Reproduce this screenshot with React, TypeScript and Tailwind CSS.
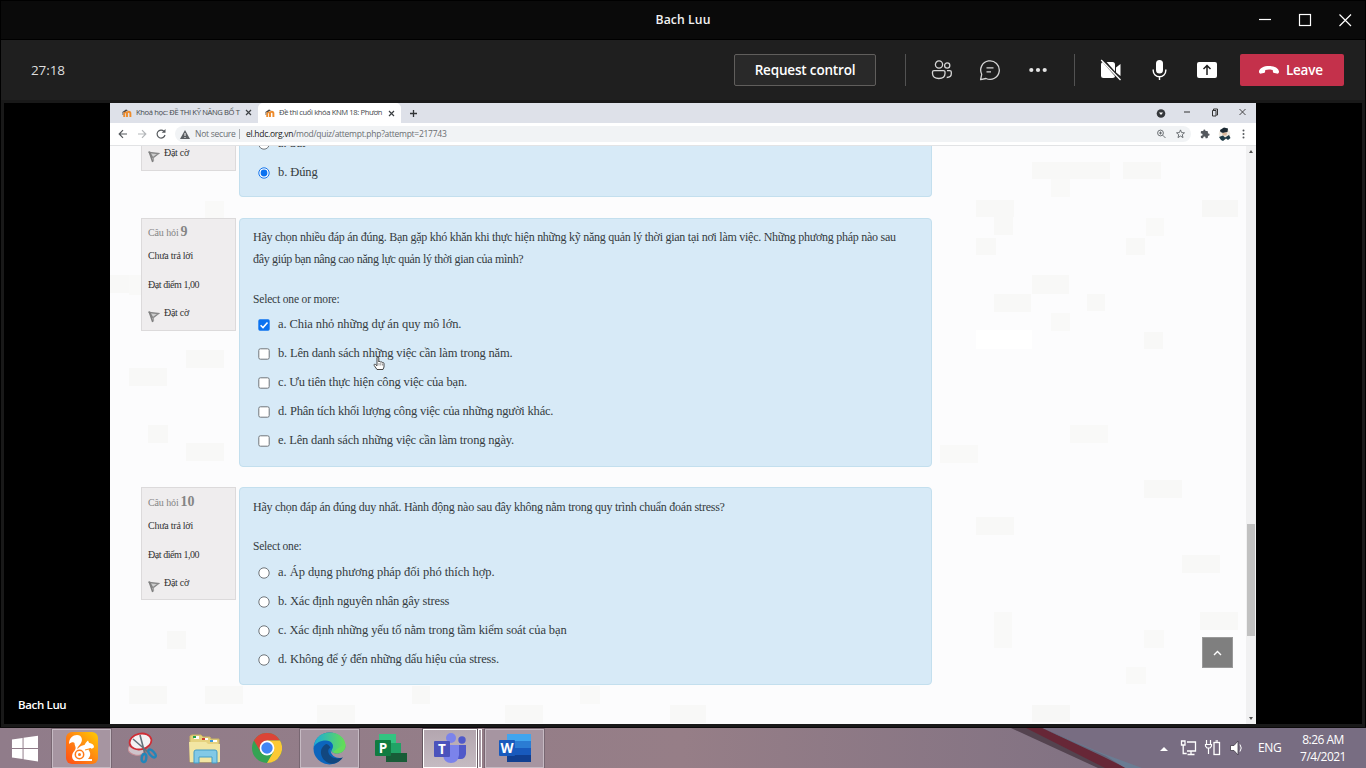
import React from "react";

const uiFont = "font-['Open_Sans','Noto_Sans',sans-serif]";
const serif = "font-['Liberation_Serif',serif]";

type Option = { text: string; checked?: boolean; track?: string };

function MoodleIcon() {
  return (
    <svg width="10" height="10" viewBox="0 0 10 10" className="shrink-0">
      <path d="M2.200 9V5.500a1.300 1.300 0 0 1 2.700 0V9M5 9V5.500a1.500 1.500 0 0 1 3.400 0V9" fill="none" stroke="#ee8c2c" strokeWidth="1.900" />
      <path d="M0 4.200 4 1.400l2 .9-3.800 2z" fill="#4a4542" />
      <path d="M.8 4v3" stroke="#4a4542" strokeWidth=".6" />
    </svg>
  );
}

function TabClose() {
  return (
    <svg width="7" height="7" viewBox="0 0 7 7" className="shrink-0">
      <path d="M1 1l5 5M6 1L1 6" stroke="#3c4043" strokeWidth="1.2" />
    </svg>
  );
}

function Flag() {
  return (
    <svg width="12" height="13" viewBox="0 0 12 13" className="shrink-0">
      <path d="M1.400 2.500 10.500 3.500 5 7.800z" fill="#cfcfcf" stroke="#888" strokeWidth="1.400" />
      <path d="M1.200 1.500 4.800 12" stroke="#808080" strokeWidth="1.700" />
      <path d="M5.500 7.500 5.600 11" stroke="#a0a0a0" />
    </svg>
  );
}

function InfoCard({ n, pad }: { n: string; pad: string }) {
  return (
    <div className={`${serif} ${pad} flex h-[113px] w-[95px] shrink-0 flex-col whitespace-nowrap border border-[#dcdadb] bg-[#efedee] pl-[6px] text-[10px] text-[#333]`}>
      <div className="mt-[4px] flex h-[18px] items-baseline gap-[2px] text-[#858585]">
        <span className="tracking-[-0.12px]">Câu hỏi</span>
        <span className="text-[14px] font-bold leading-[18px]">{n}</span>
      </div>
      <div className="mt-[6px] h-[18px] leading-[18px] tracking-[-0.25px]">Chưa trả lời</div>
      <div className="mt-[11px] h-[18px] leading-[18px] tracking-[-0.45px]">Đạt điểm 1,00</div>
      <div className="mt-[11px] flex h-[18px] leading-[18px]">
        <span className="mt-[5px] mr-[4px]"><Flag /></span>
        <span className="-mt-px tracking-[-0.3px]">Đặt cờ</span>
      </div>
    </div>
  );
}

function Mark({ kind, checked }: { kind: "radio" | "box"; checked?: boolean }) {
  return (
    <svg width="12" height="12" viewBox="0 0 12 12" className="shrink-0">
      {kind === "radio" ? (
        <>
          <circle cx="6" cy="6" r="5.200" fill="#fff" stroke={checked ? "#1273eb" : "#6f757a"} />
          {checked && <circle cx="6" cy="6" r="3.400" fill="#0b72f0" />}
        </>
      ) : checked ? (
        <>
          <rect x=".3" y=".3" width="11.400" height="11.400" rx="1.600" fill="#0b72f0" />
          <path d="M2.600 6.200 5 8.600 9.500 3.400" fill="none" stroke="#fff" strokeWidth="1.500" />
        </>
      ) : (
        <rect x=".8" y=".8" width="10.400" height="10.400" rx="1.600" fill="#fff" stroke="#6f757a" />
      )}
    </svg>
  );
}

function Options({ items, kind }: { items: Option[]; kind: "radio" | "box" }) {
  return (
    <div className="flex flex-col">
      {items.map((o) => (
        <div key={o.text} className="flex h-[29px] items-center gap-[8px] pl-[5px]">
          <Mark kind={kind} checked={o.checked} />
          <span className={`-mt-px whitespace-nowrap text-[12.5px] leading-[20px] ${o.track ?? ""}`}>{o.text}</span>
        </div>
      ))}
    </div>
  );
}

const blue = `${serif} w-[693px] shrink-0 rounded-[4px] border border-[#c3dfee] bg-[#d7eaf7] pl-[13px] text-[#353b40]`;

const tiles: [number, number, number, number, string][] = [
  [922, 17, 78, 17, "#f8f8f7"], [1013, 17, 38, 17, "#f8f8f7"], [941, 34, 19, 18, "#f9f9f8"], [866, 55, 38, 17, "#f8f8f7"], [884, 72, 19, 18, "#f8f8f7"],
  [1092, 55, 36, 17, "#f7f7f6"], [1036, 73, 18, 18, "#f9f9f8"], [866, 93, 20, 17, "#f8f8f7"], [1016, 93, 19, 17, "#f8f8f7"], [922, 130, 37, 19, "#f8f8f7"],
  [884, 149, 37, 18, "#f8f8f7"], [977, 149, 18, 17, "#f8f8f7"], [941, 168, 19, 18, "#f9f9f8"], [1034, 187, 19, 17, "#f8f8f7"], [866, 185, 56, 19, "#fff"],
  [0, 130, 20, 18, "#f8f8f7"], [76, 205, 38, 18, "#f8f8f7"], [19, 223, 38, 18, "#f8f8f7"], [38, 280, 20, 18, "#f8f8f7"], [76, 298, 38, 18, "#f8f8f7"],
  [95, 56, 19, 17, "#f9f9f8"], [19, 130, 19, 20, "#f9f9f8"], [57, 486, 19, 18, "#f8f8f7"], [19, 541, 38, 18, "#f8f8f7"], [95, 541, 38, 18, "#f8f8f7"],
  [207, 560, 38, 18, "#f8f8f7"], [302, 541, 18, 18, "#f8f8f7"], [395, 560, 38, 18, "#f8f8f7"], [470, 541, 20, 18, "#f9f9f8"], [560, 560, 36, 18, "#f8f8f7"],
  [922, 560, 38, 17, "#f7f7f6"], [884, 467, 18, 36, "#f9f9f8"], [1034, 485, 20, 18, "#f9f9f8"], [1090, 467, 38, 18, "#f8f8f7"], [1016, 522, 20, 17, "#f9f9f8"],
  [830, 300, 38, 18, "#f9f9f8"], [960, 280, 38, 18, "#f9f9f8"], [1034, 335, 38, 18, "#f8f8f7"], [866, 372, 38, 18, "#f8f8f7"], [1072, 410, 38, 18, "#f8f8f7"],
];

function WindowsBtns() {
  return (
    <svg width="110" height="20" viewBox="0 0 110 20" fill="none" stroke="#fff" strokeWidth="1.200">
      <path d="M11 9.500h12" />
      <rect x="51.500" y="4.500" width="11" height="11" />
      <path d="M91.500 4.500l11.500 11.500M103 4.500L91.500 16" />
    </svg>
  );
}

function Task({ active, children }: { active?: boolean; children?: React.ReactNode }) {
  return (
    <div className={`flex h-[39px] w-[59px] shrink-0 items-center justify-center ${active ? "border border-[#c6bac3] bg-[#a695a1] outline outline-[#786772]" : "pr-[2px]"}`}>
      {children}
    </div>
  );
}

export default function App() {
  return (
    <div className={`${uiFont} flex h-[768px] w-[1366px] flex-col overflow-hidden bg-black`}>
      <div className="flex h-[40px] shrink-0 items-center border border-black bg-[#0a0a0a]">
        <div className="w-[200px]" />
        <div className="flex-1 pl-[45px] text-center text-[12.200px] font-semibold tracking-[0.1px] text-[#f2f2f2]">Bach Luu</div>
        <div className="w-[245px] pl-[128px]"><WindowsBtns /></div>
      </div>

      <div className="mx-px flex h-[60px] shrink-0 items-center bg-[#1f1f1f] pl-[30px] pr-[21px]">
        <div className="flex-1 text-[13.5px] tracking-[-0.1px] text-[#dedede]">27:18</div>
        <div className="flex h-[32px] w-[142px] items-center justify-center rounded-[2px] border border-[#605e5c] bg-[#292929] text-[13.5px] font-semibold tracking-[-0.17px] text-white">Request control</div>
        <div className="ml-[29px] h-[32px] w-px bg-[#525252]" />
        <svg className="ml-[25px]" width="22" height="20" viewBox="0 0 22 20" fill="none" stroke="#d6d6d6" strokeWidth="1.300">
          <circle cx="8" cy="4.500" r="3.600" /><circle cx="16.200" cy="5.500" r="2.600" />
          <path d="M3 10.600h9.500a1.500 1.500 0 0 1 1.500 1.500v1.500c0 3-2.500 4.900-6.200 4.900S1.500 16.600 1.500 13.600v-1.500A1.500 1.500 0 0 1 3 10.600zM16 10.600h2.800a1.500 1.500 0 0 1 1.500 1.500v1.700c0 2.300-1.800 3.700-4.600 3.700" />
        </svg>
        <svg className="ml-[26px]" width="22" height="22" viewBox="0 0 22 22" fill="none" stroke="#d6d6d6" strokeWidth="1.300">
          <path d="M1.600 20.600l1.100-5.300A9.300 9.300 0 1 1 7 19.500z" strokeLinejoin="round" /><path d="M7.500 8.800h7M7.500 12.800h4.500" />
        </svg>
        <svg className="ml-[27px]" width="20" height="6" viewBox="0 0 20 6" fill="#e4e4e4"><circle cx="3.300" cy="3" r="2.100" /><circle cx="10" cy="3" r="2.100" /><circle cx="16.700" cy="3" r="2.100" /></svg>
        <div className="ml-[26px] h-[32px] w-px bg-[#525252]" />
        <svg className="ml-[25px]" width="22" height="22" viewBox="0 0 22 22">
          <rect x="1" y="3" width="14" height="16" rx="2.500" fill="#fff" /><path d="M16 8.500l4.500-3.500v12L16 13.500z" fill="#fff" />
          <path d="M2.500.8l17.800 20" stroke="#1f1f1f" strokeWidth="3.200" /><path d="M1.200 1l19.300 20" stroke="#fff" strokeWidth="1.300" />
        </svg>
        <svg className="ml-[29px] mr-[-1px]" width="18" height="22" viewBox="0 0 18 22" fill="none" stroke="#fff" strokeWidth="1.400">
          <rect x="5" y="1" width="7" height="13.500" rx="3.500" fill="#fff" stroke="none" /><path d="M2.200 10.500v1a6.300 6.300 0 0 0 12.600 0v-1M8.500 17.500V21" />
        </svg>
        <svg className="ml-[27px]" width="24" height="20" viewBox="0 0 24 20">
          <rect x="2" y="2" width="20" height="16" rx="2" fill="#fff" /><path d="M12 15V5.800M8.500 9L12 5.500 15.500 9" fill="none" stroke="#1f1f1f" strokeWidth="1.500" />
        </svg>
        <div className="ml-[21px] flex h-[32px] w-[104px] items-center rounded-[2px] bg-[#c4314b] pl-[18px] text-[13.5px] font-semibold tracking-[-0.25px] text-white">
          <svg width="22" height="12" viewBox="0 0 22 12" className="mr-[6px]"><path d="M1 7.600C1.400 4 6 2 11 2s9.600 2 10 5.600c.1 1.600-.8 2.300-2.200 2l-2.400-.5c-1-.2-1.400-.7-1.500-1.600l-.2-1.400c-2.400-.8-5-.8-7.400 0l-.2 1.400c-.1.900-.5 1.400-1.500 1.600l-2.400.5C1.800 9.900.9 9.200 1 7.600z" fill="#fff" /></svg>
          Leave
        </div>
      </div>

      <div className="mx-px flex h-[627px] shrink-0 border-x-[3px] border-b-[3px] border-t-[3px] border-[#191919] bg-black">
        <div className="flex w-[106px] shrink-0 flex-col justify-end pb-[11px] pl-[14px] text-[11.500px] font-semibold tracking-[-0.35px] text-white">Bach Luu</div>

        <div className="flex w-[1146px] shrink-0 flex-col bg-[#fcfcfd]">
          <div className="flex h-[20px] shrink-0 items-center bg-[#dee1e9] text-[7.600px] text-[#45494d]">
            <div className="flex w-[148px] shrink-0 items-center pl-[12px]">
              <MoodleIcon />
              <span className="ml-[4px] w-[105px] whitespace-nowrap tracking-[-0.36px]">Khoá học: ĐỀ THI KỸ NĂNG BỔ T</span>
              <span className="ml-[4px] flex"><TabClose /></span>
            </div>
            <div className="flex h-[20px] w-[143px] shrink-0 items-center rounded-t-[5px] bg-white pl-[7px]">
              <MoodleIcon />
              <span className="ml-[4px] w-[105px] whitespace-nowrap tracking-[-0.38px]">Đề thi cuối khóa KNM 18: Phươn</span>
              <span className="ml-[4px] flex"><TabClose /></span>
            </div>
            <svg className="ml-[8px]" width="9" height="9" viewBox="0 0 9 9"><path d="M4.500 1v7M1 4.500h7" stroke="#303336" strokeWidth="1.300" /></svg>
            <div className="flex-1" />
            <svg className="mr-[10px] mb-[2px]" width="90" height="12" viewBox="0 0 90 12" fill="none" stroke="#333">
              <circle cx="5" cy="7.500" r="4.300" fill="#35383c" stroke="none" /><path d="M3 6.500h4L5 9.100z" fill="#fff" stroke="none" />
              <path d="M28 6h6M56.500 4.500h3.500v5.500h-3.500zM57.500 4V3h4v6h-1" /><path d="M83.500 3l6 6M89.500 3l-6 6" strokeWidth=".9" />
            </svg>
          </div>
          <div className="flex h-[23px] shrink-0 items-center border-b border-[#e2e3e5] bg-white">
            <svg className="ml-[7px] shrink-0" width="50" height="12" viewBox="0 0 50 12" fill="none" stroke="#54585c" strokeWidth="1.200">
              <path d="M10 6H2.500M6 2.200L2.200 6 6 9.800" /><path d="M21 6h7.500M25 2.200L28.800 6 25 9.800" stroke="#b4b7ba" />
              <path d="M47 3.300A4 4 0 1 0 48 7" /><path d="M48.500 1v3.800h-3.800z" fill="#54585c" stroke="none" />
            </svg>
            <div className="ml-[8px] flex h-[16px] flex-1 items-center rounded-full bg-[#f1f3f5] pl-[5px] text-[8.500px] text-[#6a6e72]">
              <svg width="10" height="9" viewBox="0 0 10 9"><path d="M5 0l5 9H0z" fill="#5a5e62" /><path d="M5 3v3M5 7v1" stroke="#fff" /></svg>
              <span className="ml-[5px] w-[41px] whitespace-nowrap tracking-[-0.25px]">Not secure</span>
              <span className="ml-[3px] h-[10px] w-px bg-[#a9adb1]" />
              <span className="ml-[6px] whitespace-nowrap tracking-[-0.27px]"><span className="text-[#222]">el.hdc.org.vn</span>/mod/quiz/attempt.php?attempt=217743</span>
              <span className="flex-1" />
              <svg className="mr-[5px]" width="30" height="10" viewBox="0 0 30 10" fill="none" stroke="#5f6368" strokeWidth=".9">
                <circle cx="4.500" cy="4" r="2.900" /><path d="M6.700 6.200L9.500 9M3 4h3M4.500 2.500v3" />
                <path d="M24.500.9l1.100 2.700 2.900.2-2.200 1.900.7 2.900-2.500-1.600L22 8.600l.7-2.900-2.200-1.900 2.900-.2z" />
              </svg>
            </div>
            <svg className="ml-[9px]" width="10" height="10" viewBox="0 0 24 24" fill="#54585d"><path d="M20.500 11H19V7a2 2 0 0 0-2-2h-4V3.500a2.500 2.500 0 0 0-5 0V5H4a2 2 0 0 0-2 2v3.800h1.500a2.700 2.700 0 0 1 0 5.400H2V20a2 2 0 0 0 2 2h3.800v-1.500a2.700 2.700 0 0 1 5.400 0V22H17a2 2 0 0 0 2-2v-4h1.500a2.500 2.500 0 0 0 0-5z" /></svg>
            <svg className="ml-[8px]" width="13" height="14" viewBox="0 0 13 14"><circle cx="6.500" cy="7" r="5.800" fill="#efeae2" /><path d="M2 3l4-2.500 4 1L9.500 5 5 6 2.500 5z" fill="#1c2a33" /><path d="M4 6l5-.5-.5 3H5z" fill="#d9b99b" /><path d="M1 10l4-1.500 2 2 4-2.500 1.500 3-2.500 2-2-1.500-3 2.500-2-1z" fill="#1d3a45" /></svg>
            <svg className="ml-[11px] mr-[11px]" width="3" height="10" viewBox="0 0 3 10" fill="#55595d"><circle cx="1.500" cy="1.500" r="1" /><circle cx="1.500" cy="5" r="1" /><circle cx="1.500" cy="8.500" r="1" /></svg>
          </div>

          <div className="relative flex h-[578px] overflow-hidden">
            <svg className="absolute left-0 top-0" width="1136" height="578" viewBox="0 1 1136 578">
              {tiles.map(([x, y, w, h, c], i) => <rect key={i} x={x} y={y} width={w} height={h} fill={c} />)}
            </svg>
            <div className="relative flex w-[1136px] flex-col pl-[31px]">
              <div className="flex h-[72px] shrink-0 gap-[3px]">
                <div className={`${serif} flex h-[25px] w-[95px] shrink-0 border border-t-0 border-[#dcdadb] bg-[#efedee] pl-[6px] text-[10px] text-[#333]`}>
                  <span className="mt-[4px] mr-[4px]"><Flag /></span><span className="leading-[14px] tracking-[-0.3px]">Đặt cờ</span>
                </div>
                <div className={`${blue} h-[51px] overflow-hidden border-t-0 rounded-t-none`}>
                  <div className="-mt-[17px]"><Options kind="radio" items={[{ text: "a. Sai" }, { text: "b. Đúng", checked: true, track: "tracking-[-0.1px]" }]} /></div>
                </div>
              </div>
              <div className="flex h-[269px] shrink-0 gap-[3px]">
                <InfoCard n="9" pad="" />
                <div className={`${blue} h-[249px]`}>
                  <p className="mt-[7px] whitespace-nowrap text-[12px] leading-[22px] tracking-[-0.265px]">Hãy chọn nhiều đáp án đúng. Bạn gặp khó khăn khi thực hiện những kỹ năng quản lý thời gian tại nơi làm việc. Những phương pháp nào sau<br /><span className="tracking-[-0.33px]">đây giúp bạn nâng cao năng lực quản lý thời gian của mình?</span></p>
                  <p className="mb-[2px] mt-[18px] h-[20px] text-[11.5px] leading-[22px] tracking-[-0.17px]">Select one or more:</p>
                  <Options kind="box" items={[
                    { text: "a. Chia nhỏ những dự án quy mô lớn.", checked: true, track: "tracking-[-0.1px]" },
                    { text: "b. Lên danh sách những việc cần làm trong năm.", track: "tracking-[-0.19px]" },
                    { text: "c. Ưu tiên thực hiện công việc của bạn.", track: "tracking-[-0.17px]" },
                    { text: "d. Phân tích khối lượng công việc của những người khác.", track: "tracking-[-0.2px]" },
                    { text: "e. Lên danh sách những việc cần làm trong ngày.", track: "tracking-[-0.18px]" },
                  ]} />
                </div>
              </div>
              <div className="flex gap-[3px]">
                <InfoCard n="10" pad="pt-px" />
                <div className={`${blue} h-[198px] pt-px`}>
                  <p className="mt-[7px] whitespace-nowrap text-[12px] leading-[22px] tracking-[-0.25px]">Hãy chọn đáp án đúng duy nhất. Hành động nào sau đây không nằm trong quy trình chuẩn đoán stress?</p>
                  <p className="mb-[2px] mt-[17px] h-[20px] text-[11.5px] leading-[22px] tracking-[-0.2px]">Select one:</p>
                  <div className="pt-px">
                    <Options kind="radio" items={[
                      { text: "a. Áp dụng phương pháp đối phó thích hợp.", track: "tracking-[-0.05px]" },
                      { text: "b. Xác định nguyên nhân gây stress", track: "tracking-[-0.18px]" },
                      { text: "c. Xác định những yếu tố nằm trong tầm kiểm soát của bạn", track: "tracking-[-0.12px]" },
                      { text: "d. Không để ý đến những dấu hiệu của stress.", track: "tracking-[-0.14px]" },
                    ]} />
                  </div>
                </div>
              </div>
            </div>
            <div className="relative flex w-[10px] flex-col items-center bg-[#f1f1f2]">
              <svg className="mt-[4px] shrink-0" width="4" height="3" viewBox="0 0 4 3"><path d="M0 3l2-3 2 3z" fill="#505050" /></svg>
              <div className="mt-[371px] h-[112px] w-[8px] shrink-0 bg-[#c1c1c1]" />
              <svg className="mt-[81px] shrink-0" width="4" height="3" viewBox="0 0 4 3"><path d="M0 0l2 3 2-3z" fill="#505050" /></svg>
            </div>
            <div className="absolute left-[1092px] top-[491px] flex h-[31px] w-[31px] items-center justify-center border border-[#999] bg-[#7f7f7f]">
              <svg width="9" height="6" viewBox="0 0 9 6"><path d="M1 5l3.500-3.500L8 5" fill="none" stroke="#fff" strokeWidth="1.400" /></svg>
            </div>
            <svg className="absolute left-[263px] top-[210px]" width="13" height="15" viewBox="0 0 13 15"><path d="M4 13.500L1.200 9.500c-.6-1 .6-1.800 1.400-1L4 9.800V2c0-1.500 1.800-1.500 1.800 0v4c.3-.8 1.700-.7 1.900.2.500-.6 1.500-.4 1.700.4.600-.4 1.600 0 1.600 1v3.400L10 13.500z" fill="#fff" stroke="#333" strokeWidth=".9" /><path d="M6 7v2.500M7.800 7v2.500M9.500 7.500v2" stroke="#555" strokeWidth=".6" /></svg>
          </div>
        </div>
      </div>

      <div className="relative flex h-[41px] shrink-0 items-center border-t border-[#0c0a0b] bg-gradient-to-r from-[#907c8a] via-[#967e87] to-[#746a80]">
        <svg className="absolute left-[1000px] top-0" width="366" height="40" viewBox="0 0 366 40">
          <path d="M11 0H366V40H100z" fill="#786d82" />
          <path d="M11 0H42L125 40H98z" fill="#54434f" /><path d="M26 0H42L106 28 125 40H105z" fill="#672737" /><path d="M42 0L104 26 142 40H126L104 29z" fill="#64839a" opacity=".7" />
        </svg>
        <div className="relative flex h-full w-full items-center">
          <svg className="ml-[11px]" width="27" height="27" viewBox="0 0 28 27" preserveAspectRatio="none" fill="#fff"><path d="M1 4.500L12 3v10H1zM13 2.800L28 .8V13H13zM1 14h11v10L1 22.500zM13 14h15v12.500L13 24.200z" /></svg>
          <div className="ml-[14px]"><Task active>
            <svg width="32" height="32" viewBox="0 0 32 32"><defs><linearGradient id="uc" x1="0" x2="1" y1="1" y2="0"><stop stopColor="#ff4c16" /><stop offset=".55" stopColor="#ff8b12" /><stop offset="1" stopColor="#ffcd00" /></linearGradient></defs><rect width="32" height="32" rx="6" fill="url(#uc)" /><path d="M3 12c0-6 4-9 8-9 5 0 6 5 4 8-1.500 2.500-4 4-3.500 6 1.500-1.500 3-3.500 7-4 1-2.500 2.500-3.500 3.500-4.500l1 2.200c3.200.6 5 2.300 5 4.300-.5 1.700-3 1.800-5 1.800-.5 1.200-.3 1.700.5 2.700 1.500 2.500.6 5.500-1.500 7.500h4v2H9c-3-1.500-4-5.500-1.500-9 1.500-2 2.500-3 2-5-.4-1.500-1-2.500-1-4-.7-1.500-3.500-1-5.500 1z" fill="#fff" /><circle cx="13.500" cy="22.500" r="4.200" fill="none" stroke="#ff7a18" strokeWidth="1.500" /><circle cx="13.500" cy="22.500" r="1.500" fill="#ff7a18" /><path d="M19 18l6-1.500" stroke="#ff8b12" strokeWidth="1.200" /></svg>
          </Task></div>
          <div className="ml-[3px]"><Task>
            <svg width="30" height="32" viewBox="0 0 30 32"><ellipse cx="8" cy="18" rx="8" ry="5" fill="#cfc4cb" stroke="#c98f98" transform="rotate(12 8 18)" /><ellipse cx="12.500" cy="9.500" rx="11" ry="7.800" fill="#f4f2f3" stroke="#cf2d35" strokeWidth="1.800" transform="rotate(-12 12.500 9.500)" /><path d="M5 7l15 13M12 3l5 19" stroke="#65727b" strokeWidth="1.600" /><ellipse cx="16" cy="26" rx="2.300" ry="4" fill="none" stroke="#2286ba" strokeWidth="2.400" transform="rotate(8 16 26)" /><ellipse cx="24" cy="21.500" rx="2.300" ry="4.800" fill="none" stroke="#2286ba" strokeWidth="2.400" transform="rotate(-42 24 21.500)" /></svg>
          </Task></div>
          <div className="ml-[3px]"><Task>
            <svg width="34" height="31" viewBox="0 0 34 31"><path d="M2 7V3l2-1h9l2 2h7l1 2h8v23H2z" fill="#e5d27f" stroke="#c9b565" /><path d="M6 3h5v3H6zM14 5h6v2h-6zM22 7h7v2h-7z" fill="#fff" /><path d="M5 3h3v2H5z" fill="#26a249" /><path d="M14 5h3v2h-3z" fill="#cf4130" /><path d="M22 7h3v2h-3z" fill="#3b97d8" /><path d="M1 9h17l2 2h12v18H2z" fill="#f2e6a3" /><path d="M6 30V19q0-2 2-2h19q2 0 2 2v11h-5v-6H11v6z" fill="#82c9e6" stroke="#439dc6" /></svg>
          </Task></div>
          <div className="ml-[3px]"><Task>
            <svg width="30" height="30" viewBox="0 0 30 30"><circle cx="15" cy="15" r="15" fill="#34a353" /><path d="M15 15L2 7.500A15 15 0 0 1 28 7.500H15z" fill="#dc4437" /><path d="M15 7.500h13A15 15 0 0 1 15 30l6.500-11.200z" fill="#fcc934" /><path d="M2 7.500L8.500 18.800 15 15 15 7.500z" fill="#dc4437" /><circle cx="15" cy="15" r="7.400" fill="#fff" /><circle cx="15" cy="15" r="5.700" fill="#4285f4" /></svg>
          </Task></div>
          <div className="ml-[3px]"><Task active>
            <svg width="33" height="33" viewBox="0 0 33 33"><defs><linearGradient id="eg"><stop stopColor="#1caada" /><stop offset="1" stopColor="#66df52" /></linearGradient></defs><circle cx="16.500" cy="16.500" r="16" fill="#0c65bd" /><path d="M.7 15C2 5.500 8 .5 17 .5c9 0 15.500 6 15.500 13 0 5.500-4 8-8.500 8-5 0-6.500-2-5-4 3-5-1-9-6-9C7 8.500 3 11 .7 15z" fill="url(#eg)" /><path d="M13 12c-9 5-5 17 4 19.500 6 1 10-2 13-6.500-5 3-12 1-14-3-1.500-3-.8-5 1.500-6.500-1-2-3-3.300-4.500-3.500z" fill="#12477f" /><path d="M18 16.500c-1 3 2 5 6 5 4 0 8-2.500 8.500-7.500.8 5 1.500 7.500-1.500 11-6 3-15-1-13-8.500z" fill="#a695a1" /><path d="M23 21.500c5 0 9-2.500 9.500-7.500V12l-4 2-8 5.500c0 1.300 1 2 2.500 2z" fill="#63dc5c" /></svg>
          </Task></div>
          <div className="ml-[3px]"><Task>
            <svg width="33" height="28" viewBox="0 0 33 28"><path d="M5 0h17v9H5z" fill="#33c481" /><path d="M11 9h16v10H11z" fill="#21a366" /><path d="M12 19h21v9H12z" fill="#185c37" /><rect x="1" y="6" width="16" height="16" rx="1" fill="#107c41" /><text x="9" y="18.700" textAnchor="middle" fontFamily="Open Sans" fontWeight="700" fontSize="13.500" fill="#fff">P</text></svg>
          </Task></div>
          <div className="ml-[2px] flex h-[39px] w-[59px] shrink-0">
            <div className="flex w-[54px] items-center justify-center border border-white bg-gradient-to-b from-[#b3a6af] to-[#c5bbc2] outline outline-[#655760]"><svg width="33" height="31" viewBox="0 0 33 31"><circle cx="17" cy="5" r="5" fill="#7b83eb" /><circle cx="28" cy="7" r="3.700" fill="#5059c9" /><path d="M21 12h11v9q-1 5-5 5h-6z" fill="#5059c9" /><path d="M9 12h16v10q-1 8-8 8t-8-8z" fill="#7b83eb" /><rect y="8" width="16" height="16" rx="1" fill="#4b53bc" /><text x="8" y="20.700" textAnchor="middle" fontFamily="Open Sans" fontWeight="700" fontSize="13.500" fill="#fff">T</text></svg></div>
            <div className="ml-[1px] w-[4px] border border-white bg-[#a999a5]" />
          </div>
          <div className="ml-[3px]"><Task active>
            <svg width="33" height="28" viewBox="0 0 33 28"><path d="M9 0h24v7H9z" fill="#41a5ee" /><path d="M9 7h24v7H9z" fill="#2b7cd3" /><path d="M9 14h24v7H9z" fill="#185abd" /><path d="M9 21h24v7H9z" fill="#103f91" /><rect x="1" y="6" width="16" height="16" rx="1" fill="#185abd" /><text x="9" y="18.700" textAnchor="middle" fontFamily="Open Sans" fontWeight="700" fontSize="13.500" fill="#fff">W</text></svg>
          </Task></div>
          <div className="flex-1" />
          <svg width="86" height="20" viewBox="0 0 86 20" fill="none" stroke="#fff" strokeWidth="1.300">
            <path d="M1 13l4-4 4 4z" fill="#fff" stroke="none" />
            <path d="M22.500 3h3.500v4h-3.500zM24.200 7v8.500h3.500M28 4h8.500v9H28M32 13v3M28.500 16.500h7" />
            <path d="M47.500 2v4M51.500 2v4M46.500 6.500h6v1.500l-1.500 2h-3l-1.500-2zM49.500 10v6" strokeWidth="1.200" />
            <rect x="55" y="4.500" width="5.500" height="12" /><path d="M56.500 3h2.500" />
            <path d="M71.500 7.500h3.500l4-4.500v14l-4-4.500h-3.500z" fill="#fff" stroke="#433c49" strokeWidth=".8" /><path d="M81 6.500q2.500 3.500 0 7" strokeWidth="1" />
          </svg>
          <div className="ml-[13px] w-[30px] text-[12px] tracking-[-0.4px] text-white">ENG</div>
          <div className="ml-[3px] mr-[11px] w-[64px] text-center text-[12px] leading-[17px] tracking-[-0.5px] text-white">8:26 AM<br />7/4/2021</div>
        </div>
      </div>
    </div>
  );
}
